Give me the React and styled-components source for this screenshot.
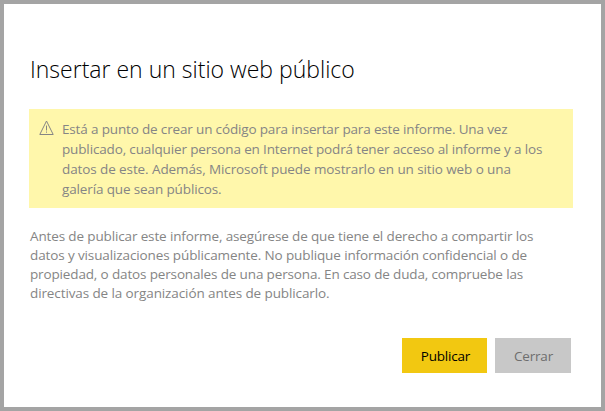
import React from "react";
import styled, { createGlobalStyle } from "styled-components";

const GlobalStyle = createGlobalStyle`
  * { box-sizing: border-box; }
  body { margin: 0; background: #fff; }
`;

const Dialog = styled.main`
  width: 605px;
  height: 411px;
  padding: 50px 28px 0 25px;
  border: 4px solid #a4a4a4;
  background: #fff;
  color: #858585;
  font-family: "Open Sans", "Noto Sans", sans-serif;
  font-size: 13.5px;
  overflow: hidden;
`;

const Title = styled.h1`
  margin: 0;
  height: 30px;
  padding-left: 1px;
  line-height: 30px;
  font-size: 23px;
  font-weight: 300;
  color: #000;
  white-space: nowrap;
`;

const Warning = styled.section`
  display: flex;
  width: 544px;
  height: 99px;
  margin-top: 25px;
  padding: 10px 0 0 10px;
  background: #fff7ab;
`;

const WarningIcon = styled.svg`
  flex: none;
  width: 15px;
  height: 16px;
  margin-right: 8px;
`;

const Copy = styled.p`
  margin: 0;
  line-height: ${(p) => p.$leading}px;
`;

const Line = styled.span`
  display: block;
  width: max-content;
  white-space: nowrap;
  letter-spacing: ${(p) => p.$tracking}px;
`;

const Notice = styled.section`
  margin-top: 19px;
  padding-left: 1px;
`;

const Actions = styled.footer`
  display: flex;
  justify-content: flex-end;
  gap: 8px;
  margin-top: 35px;
  padding-right: 2px;
`;

const Button = styled.button`
  width: ${(p) => (p.$primary ? 85 : 76)}px;
  height: 35px;
  padding: 1px 0 0 ${(p) => (p.$primary ? 2 : 1)}px;
  border: 0;
  background: ${(p) => (p.$primary ? "#f2c811" : "#c8c8c8")};
  color: ${(p) => (p.$primary ? "#000" : "#6e6e6e")};
  font: inherit;
  letter-spacing: -0.2px;
`;

const warningLines = [
  ["Está a punto de crear un código para insertar para este informe. Una vez", -0.156],
  ["publicado, cualquier persona en Internet podrá tener acceso al informe y a los", -0.145],
  ["datos de este. Además, Microsoft puede mostrarlo en un sitio web o una", -0.1],
  ["galería que sean públicos.", -0.13],
];

const noticeLines = [
  ["Antes de publicar este informe, asegúrese de que tiene el derecho a compartir los", -0.135],
  ["datos y visualizaciones públicamente. No publique información confidencial o de", -0.12],
  ["propiedad, o datos personales de una persona. En caso de duda, compruebe las", -0.145],
  ["directivas de la organización antes de publicarlo.", -0.106],
];

function Lines({ items, leading }) {
  return (
    <Copy $leading={leading}>
      {items.map(([text, tracking]) => (
        <Line key={text} $tracking={tracking}>{text} </Line>
      ))}
    </Copy>
  );
}

export default function App() {
  return (
    <>
      <GlobalStyle />
      <Dialog>
        <Title>Insertar en un sitio web público</Title>
        <Warning>
          <WarningIcon viewBox="0 0 15 16" fill="none" stroke="#858585">
            <path d="M7.5 2 L14.2 15.5 H0.8 Z" />
            <path d="M7.5 6.5v5M7.5 12.5v1.2" />
          </WarningIcon>
          <Lines items={warningLines} leading={20} />
        </Warning>
        <Notice>
          <Lines items={noticeLines} leading={19} />
        </Notice>
        <Actions>
          <Button $primary>Publicar</Button>
          <Button>Cerrar</Button>
        </Actions>
      </Dialog>
    </>
  );
}
